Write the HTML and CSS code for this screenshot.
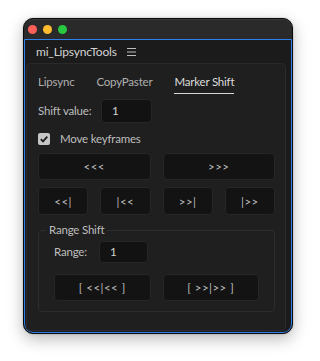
FILE: index.html
```html
<!DOCTYPE html>
<html>
<head>
<meta charset="utf-8">
<link rel="stylesheet" href="styles.css">
</head>
<body>
<div class="window">
  <div class="titlebar">
    <span class="light red"></span>
    <span class="light yellow"></span>
    <span class="light green"></span>
  </div>
  <div class="panel">
    <div class="panel-header">
      <span class="panel-title">mi_LipsyncTools</span>
      <svg class="menu-icon" width="9" height="8" viewBox="0 0 9 8"><path d="M0 0.5H9M0 4H9M0 7.5H9" stroke="#bdbdbd" stroke-width="1"/></svg>
    </div>
    <div class="content">
      <div class="tabs">
        <span class="tab">Lipsync</span>
        <span class="tab">CopyPaster</span>
        <span class="tab active">Marker Shift</span>
      </div>
      <div class="field-row shift-row">
        <span class="label shift-label">Shift value:</span>
        <span class="input">1</span>
      </div>
      <div class="check-row">
        <span class="checkbox"><svg width="12" height="12" viewBox="0 0 12 12"><path d="M2.8 6.2L5 8.4L9.3 3.6" fill="none" stroke="#1c1c1c" stroke-width="1.8"/></svg></span>
        <span class="label">Move keyframes</span>
      </div>
      <div class="btn-row two">
        <span class="btn">&lt;&lt;&lt;</span>
        <span class="btn">&gt;&gt;&gt;</span>
      </div>
      <div class="btn-row four">
        <span class="btn">&lt;&lt;|</span>
        <span class="btn">|&lt;&lt;</span>
        <span class="btn">&gt;&gt;|</span>
        <span class="btn">|&gt;&gt;</span>
      </div>
      <fieldset class="group">
        <legend class="group-title">Range Shift</legend>
        <div class="field-row range-row">
          <span class="label range-label">Range:</span>
          <span class="input small">1</span>
        </div>
        <div class="btn-row range-btns">
          <span class="btn">[ &lt;&lt;|&lt;&lt; ]</span>
          <span class="btn">[ &gt;&gt;|&gt;&gt; ]</span>
        </div>
      </fieldset>
    </div>
  </div>
</div>
</body>
</html>
```
FILE: styles.css
```css
* { box-sizing: border-box; }
html, body { margin: 0; padding: 0; background: #ffffff; }
body {
  font-family: "Lato", "Liberation Sans", sans-serif;
  font-size: 11.5px;
  letter-spacing: -0.2px;
  width: 315px;
  height: 361px;
  overflow: hidden;
}
.window {
  margin: 18px 0 0 23px;
  width: 270px;
  height: 316px;
  border: 1px solid #0b0b0b;
  border-radius: 10px;
  background: #2a2a2a;
  box-shadow: 0 5px 16px rgba(0,0,0,0.28), 0 0 2px rgba(0,0,0,0.25), inset 0 1px 0 #3a3a3a;
  display: flex;
  flex-direction: column;
  overflow: hidden;
}
.titlebar {
  height: 20px;
  flex: none;
  display: flex;
  align-items: center;
  padding-left: 4px;
  gap: 6px;
}
.light {
  width: 9px;
  height: 9px;
  border-radius: 50%;
  display: block;
}
.red { background: #fe5f57; }
.yellow { background: #febc2e; }
.green { background: #28c840; }
.panel {
  flex: 1;
  border: 1px solid #2f80ed;
  border-radius: 0 0 9px 9px;
  background: #1b1b1b;
  display: flex;
  flex-direction: column;
  padding: 0 5px 1px 1px;
}
.panel-header {
  height: 23px;
  flex: none;
  display: flex;
  align-items: center;
  padding-left: 10px;
  gap: 10px;
}
.panel-title {
  color: #d2d2d2;
  font-size: 12px;
}
.menu-icon { display: block; margin-top: 1px; }
.content {
  flex: 1;
  border: 1px solid #2a2a2a;
  border-radius: 4px;
  background: #1f1f1f;
  padding: 0 10px 0 11px;
  display: flex;
  flex-direction: column;
}
.tabs {
  display: flex;
  gap: 22px;
  padding-top: 10px;
}
.tab {
  line-height: 16px;
  padding-bottom: 3px;
  color: #b0b0b0;
  border-bottom: 1px solid transparent;
}
.tab.active {
  color: #dcdcdc;
  border-bottom-color: #d6d6d6;
}
.field-row {
  display: flex;
  align-items: center;
}
.shift-row { margin-top: 5px; }
.label { color: #bebebe; line-height: 16px; }
.shift-label { width: 63px; }
.range-label { width: 45px; }
.input {
  width: 51px;
  height: 24px;
  background: #121212;
  border: 1px solid #262626;
  border-radius: 4px;
  color: #d0d0d0;
  padding-left: 10px;
  line-height: 22px;
}
.input.small { width: 49px; height: 22px; line-height: 20px; }
.check-row {
  margin-top: 8px;
  display: flex;
  align-items: center;
  gap: 10px;
}
.checkbox {
  width: 12px;
  height: 12px;
  background: #c6c6c6;
  border-radius: 2px;
  display: block;
}
.checkbox svg { display: block; }
.btn-row { display: flex; gap: 12px; }
.btn {
  flex: 1;
  height: 27px;
  background: #131313;
  border: 1px solid #262626;
  border-radius: 4px;
  color: #bdbdbd;
  font-size: 11.5px;
  letter-spacing: 0.5px;
  display: flex;
  align-items: center;
  justify-content: center;
  white-space: pre;
}
.btn-row.two { margin-top: 6px; }
.btn-row.four { margin-top: 7px; }
.btn-row.four .btn { height: 28px; }
.group {
  margin: 7px 0 0 0;
  padding: 3px 15px 10px 15px;
  border: 1px solid #2d2d2d;
  border-radius: 4px;
  min-width: 0;
}
.group-title {
  margin-left: -8px;
  padding: 0 3px;
  line-height: 16px;
  color: #bebebe;
}
.range-row { height: 22px; }
.range-btns { margin-top: 11px; }
```
